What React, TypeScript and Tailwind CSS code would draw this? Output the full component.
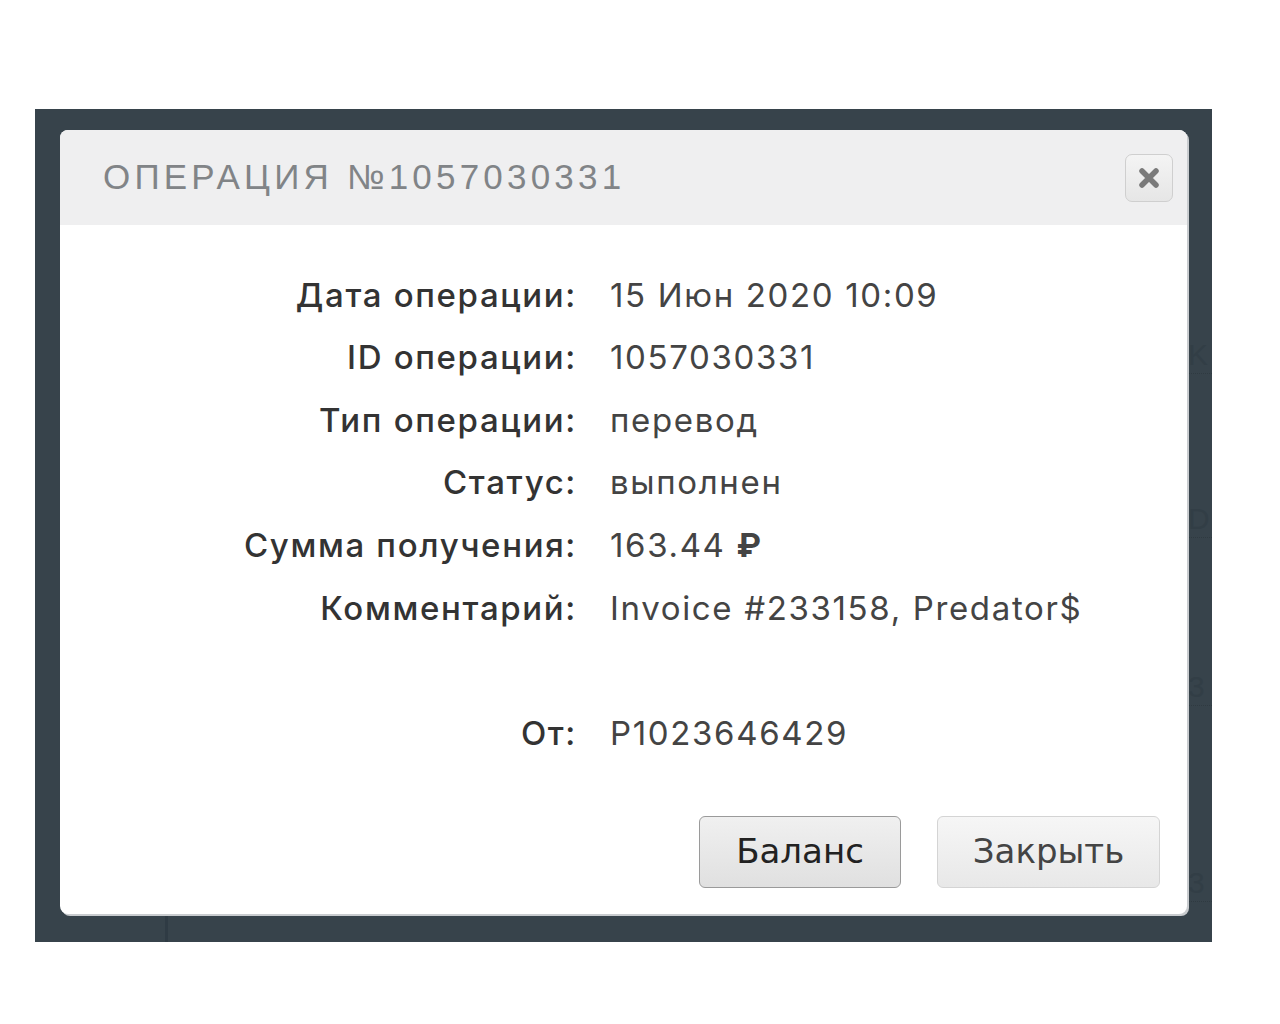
import React from "react";

const ROWS: Array<[string, React.ReactNode]> = [
  ["Дата операции:", "15 Июн 2020 10:09"],
  ["ID операции:", "1057030331"],
  ["Тип операции:", "перевод"],
  ["Статус:", "выполнен"],
  ["Сумма получения:", <>163.44 <span className="font-bold">₽</span></>],
  ["Комментарий:", "Invoice #233158, Predator$"],
];

// faint page content showing through the backdrop on the right edge
const PEEK: Array<[string, number]> = [
  ["K", 228],
  ["D", 392],
  ["3", 560],
  ["3", 756],
];

export default function App() {
  return (
    <div className="min-h-[1024px] w-[1280px] bg-white pt-[109px] pl-[35px]">
      {/* dark backdrop */}
      <div className="relative w-[1177px] h-[833px] bg-[#37434b] pt-[21px] pl-[25px]">
        {PEEK.map(([ch, top], i) => (
          <div
            key={i}
            className="absolute left-[1153px] w-[24px] border-b border-dotted border-[#2f3a41] text-[30px] leading-[36px] text-[#323e46]"
            style={{ top, fontFamily: "'Liberation Sans', sans-serif" }}
          >
            {ch}
          </div>
        ))}
        <div className="absolute left-[130px] top-[805px] w-[3px] h-[28px] bg-[#2f3b44]" />

        {/* modal */}
        <div className="relative w-[1127px] h-[784px] bg-white rounded-[8px] shadow-[2px_2px_0_#c9cccf] flex flex-col overflow-hidden">
          <div className="h-[95px] bg-[#efeff0] flex items-center justify-between pl-[43px] pr-[14px]">
            <h1
              className="text-[#818487] text-[35px] tracking-[0.12em]"
              style={{ fontFamily: "'Liberation Sans', sans-serif" }}
            >
              ОПЕРАЦИЯ №1057030331
            </h1>
            <button className="w-[48px] h-[48px] rounded-[7px] border border-[#cfcfcf] bg-gradient-to-b from-[#f4f4f4] to-[#e6e6e6] flex items-center justify-center">
              <svg width="26" height="24" viewBox="0 0 26 24">
                <path d="M6 5L20 19M20 5L6 19" stroke="#7a7a7a" strokeWidth="5.5" strokeLinecap="round" />
              </svg>
            </button>
          </div>

          <div
            className="flex-1 flex flex-col pt-[39px]"
            style={{ fontFamily: "Inter, sans-serif" }}
          >
            {ROWS.map(([label, value]) => (
              <Row key={label} label={label} value={value} />
            ))}
            <div className="h-[62.6px]" />
            <Row label="От:" value="P1023646429" />

            <div className="flex gap-[36px] pl-[639px] mt-[51px]" style={{ fontFamily: "'DejaVu Sans', sans-serif" }}>
              <button className="w-[202px] h-[72px] rounded-[6px] border border-[#9a9a9a] bg-gradient-to-b from-[#f0f0f0] to-[#e0e0e0] text-[#222] text-[34px]">
                Баланс
              </button>
              <button className="w-[223px] h-[72px] rounded-[6px] border border-[#d4d4d4] bg-gradient-to-b from-[#f6f6f6] to-[#e8e8e8] text-[#444] text-[34px]">
                Закрыть
              </button>
            </div>
          </div>
        </div>
      </div>
    </div>
  );
}

function Row({ label, value }: { label: string; value: React.ReactNode }) {
  return (
    <div className="flex items-center h-[62.6px] text-[33px] tracking-[0.05em]">
      <div className="w-[517px] text-right text-[#333] font-medium">{label}</div>
      <div className="pl-[33px] text-[#444]">{value}</div>
    </div>
  );
}
